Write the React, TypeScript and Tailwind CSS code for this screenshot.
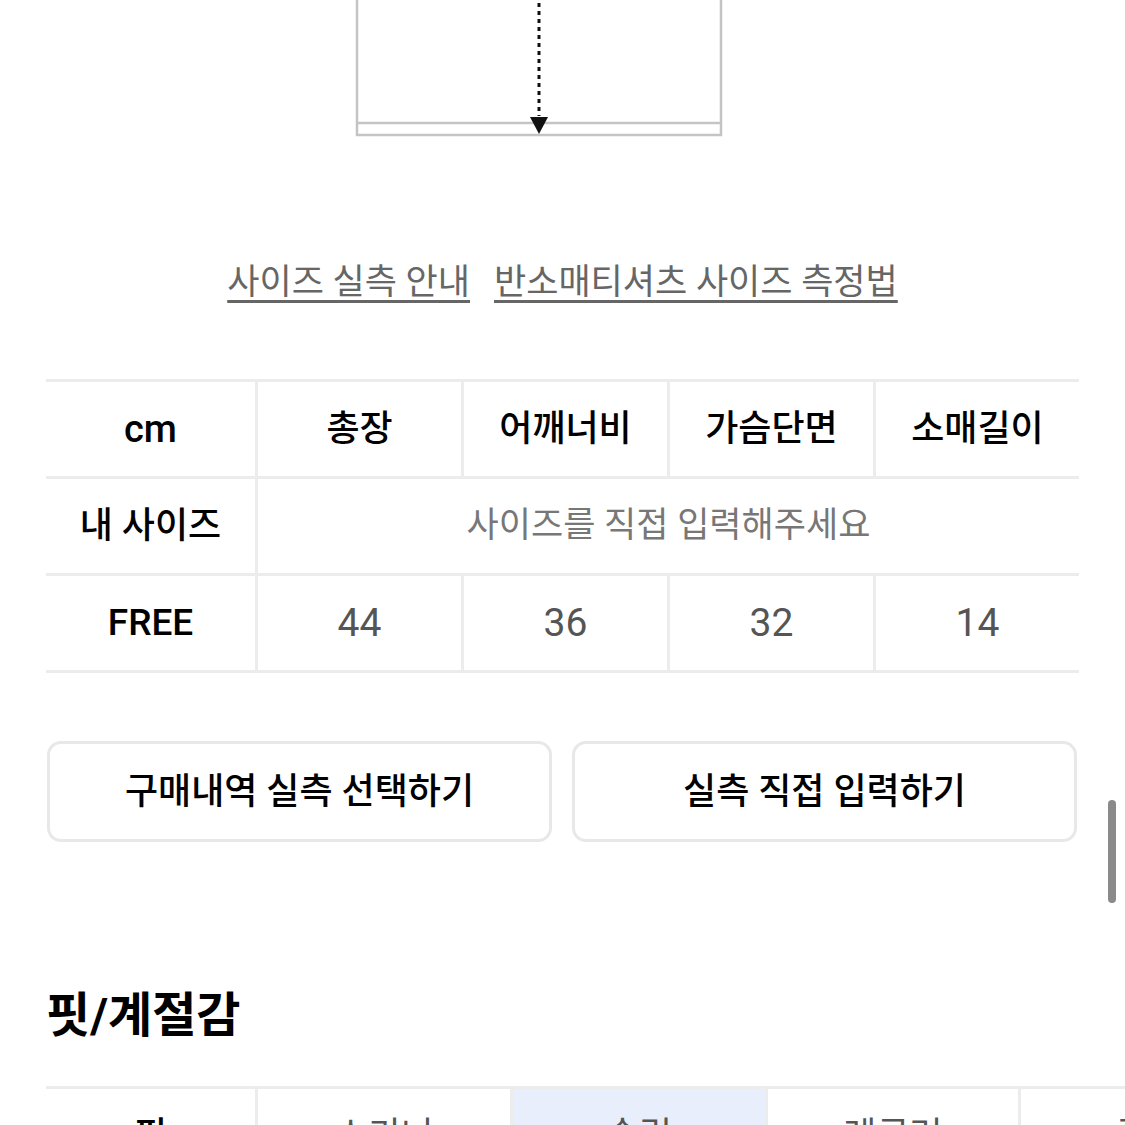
const headers = ["총장", "어깨너비", "가슴단면", "소매길이"];
const values = ["44", "36", "32", "14"];
const fits = [
  { label: "스키니", active: false },
  { label: "슬림", active: true },
  { label: "레귤러", active: false },
  { label: "루즈", active: false }
];

function MeasureDiagram() {
  return (
    <svg width="372" height="140" viewBox="0 0 372 140" className="ml-[354px] block">
      <path d="M3 0 V135 H367 V0" fill="none" stroke="#c4c4c4" strokeWidth="2.5" />
      <line x1="3" y1="123" x2="367" y2="123" stroke="#c4c4c4" strokeWidth="2.5" />
      <line
        x1="185"
        y1="3"
        x2="185"
        y2="116"
        stroke="#111"
        strokeWidth="3"
        strokeDasharray="4 4"
      />
      <polygon points="176,117 194,117 185,134" fill="#111" />
    </svg>
  );
}

export default function App() {
  return (
    <div className="relative h-[1125px] w-[1125px] overflow-hidden bg-white font-['Roboto','Noto_Sans_CJK_KR',sans-serif] text-black">
      <MeasureDiagram />

      <div className="mt-[119px] flex h-[48px] items-center justify-center gap-[24px] text-[35px] leading-[48px] text-[#666]">
        <span className="underline decoration-[3px] underline-offset-[6px]">사이즈 실측 안내</span>
        <span className="underline decoration-[3px] underline-offset-[6px]">반소매티셔츠 사이즈 측정법</span>
      </div>

      <div className="mx-[46px] mt-[72px] grid grid-cols-[209px_206px_206px_206px_206px] border-t-[3px] border-[#ececec]">
        <div className="flex h-[97px] items-center justify-center border-b-[3px] border-[#ececec] text-[38px] font-medium">
          cm
        </div>
        {headers.map((h) => (
          <div
            key={h}
            className="flex h-[97px] items-center justify-center border-b-[3px] border-l-[3px] border-[#ececec] text-[36px] font-medium"
          >
            {h}
          </div>
        ))}

        <div className="flex h-[97px] items-center justify-center border-b-[3px] border-[#ececec] text-[36px] font-medium">
          내 사이즈
        </div>
        <div className="col-span-4 flex h-[97px] items-center justify-center border-b-[3px] border-l-[3px] border-[#ececec] text-[35px] text-[#777]">
          사이즈를 직접 입력해주세요
        </div>

        <div className="flex h-[97px] items-center justify-center border-b-[3px] border-[#ececec] text-[37px] font-medium">
          FREE
        </div>
        {values.map((v, i) => (
          <div
            key={i}
            className="flex h-[97px] items-center justify-center border-b-[3px] border-l-[3px] border-[#ececec] text-[39px] text-[#555]"
          >
            {v}
          </div>
        ))}
      </div>

      <div className="mx-[47px] mt-[68px] grid grid-cols-2 gap-[20px] pr-[1px]">
        <button
          type="button"
          className="flex h-[101px] items-center justify-center rounded-[14px] border-[3px] border-[#e8e8e8] bg-white text-[36px] font-medium"
        >
          구매내역 실측 선택하기
        </button>
        <button
          type="button"
          className="flex h-[101px] items-center justify-center rounded-[14px] border-[3px] border-[#e8e8e8] bg-white text-[36px] font-medium"
        >
          실측 직접 입력하기
        </button>
      </div>

      <h2 className="ml-[46px] mt-[145px] text-[48px] leading-[58px] font-bold">핏/계절감</h2>

      <div className="ml-[46px] mt-[41px] grid w-[1229px] grid-cols-[209px_255px_255px_253px_257px] border-t-[3px] border-[#ececec]">
        <div className="flex h-[97px] items-center justify-center border-b-[3px] border-[#ececec] text-[36px] font-medium">
          핏
        </div>
        {fits.map((f) => (
          <div
            key={f.label}
            className={`flex h-[97px] items-center justify-center border-b-[3px] border-l-[3px] border-[#ececec] text-[36px] text-[#555] ${
              f.active ? "bg-[#e8eefc]" : "bg-white"
            }`}
          >
            {f.label}
          </div>
        ))}
      </div>

      <div className="absolute left-[1108px] top-[800px] h-[103px] w-[8px] rounded-full bg-[#8a8a8a]" />
    </div>
  );
}
